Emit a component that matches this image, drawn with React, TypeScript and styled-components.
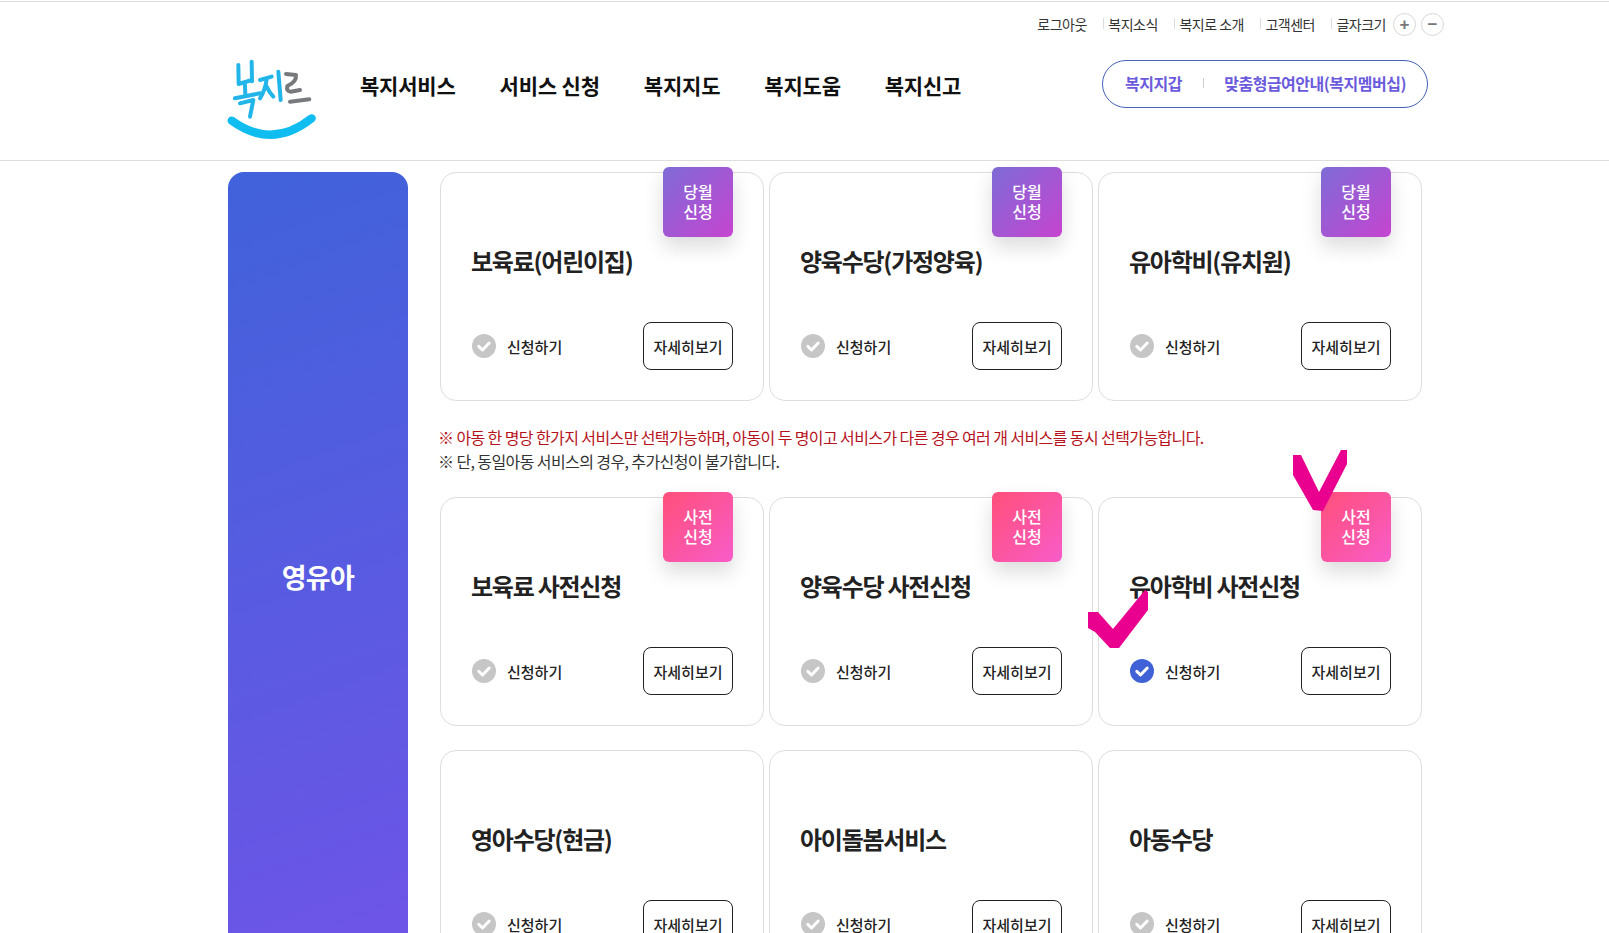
import React from "react";
import styled, { createGlobalStyle } from "styled-components";

const FONT = `"Noto Sans CJK KR", "Noto Sans", sans-serif`;

const topMenu = ["로그아웃", "복지소식", "복지로 소개", "고객센터"];
const mainMenu = ["복지서비스", "서비스 신청", "복지지도", "복지도움", "복지신고"];

type Service = { title: string; badge?: "month" | "pre"; checked?: boolean };

const firstRow: Service[] = [
	{ title: "보육료(어린이집)", badge: "month" },
	{ title: "양육수당(가정양육)", badge: "month" },
	{ title: "유아학비(유치원)", badge: "month" },
];

const restRows: Service[] = [
	{ title: "보육료 사전신청", badge: "pre" },
	{ title: "양육수당 사전신청", badge: "pre" },
	{ title: "유아학비 사전신청", badge: "pre", checked: true },
	{ title: "영아수당(현금)" },
	{ title: "아이돌봄서비스" },
	{ title: "아동수당" },
];

function Logo() {
	return (
		<LogoSvg viewBox="0 0 300 270">
			<g fill="none" stroke="#22b5ea" strokeWidth="12" strokeLinecap="round" strokeLinejoin="round">
				<path d="M49 33 L50 90 L90 78 M89 23 L90 82" />
				<path d="M39 133 L114 118 M69 93 L70 126" />
				<path d="M54 148 L94 138 L84 188" />
				<path d="M114 78 L149 68 M134 76 Q130 108 114 133 M134 98 Q142 116 154 128" />
				<path d="M169 53 L176 138" />
			</g>
			<path
				d="M192 60 L222 63 Q224 84 196 96 Q192 112 206 113 L234 108 M204 143 L262 136"
				fill="none"
				stroke="#77797c"
				strokeWidth="12"
				strokeLinecap="round"
				strokeLinejoin="round"
			/>
			<path d="M29 200 Q150 288 269 193" fill="none" stroke="#10bdf1" strokeWidth="25" strokeLinecap="round" />
		</LogoSvg>
	);
}

function CheckIcon({ on }: { on?: boolean }) {
	return (
		<svg width="24" height="24" viewBox="0 0 24 24">
			<circle cx="12" cy="12" r="12" fill={on ? "#3f62d6" : "#c6c6c6"} />
			<path d="M6.8 12.4 L10.5 16 L17.2 9" fill="none" stroke="#fff" strokeWidth="3" strokeLinecap="round" strokeLinejoin="round" />
		</svg>
	);
}

function Card({ item }: { item: Service }) {
	return (
		<CardBox>
			{item.badge && (
				<Badge $kind={item.badge}>
					<span>{item.badge === "month" ? "당월" : "사전"}</span>
					<span>신청</span>
				</Badge>
			)}
			<CardTitle>{item.title}</CardTitle>
			<CardFooter>
				<ApplyLabel>
					<CheckIcon on={item.checked} />
					신청하기
				</ApplyLabel>
				<DetailButton>자세히보기</DetailButton>
			</CardFooter>
		</CardBox>
	);
}

export default function App() {
	return (
		<Page>
			<GlobalStyle />
			<Header>
				<HeaderInner>
					<UtilRow>
						{topMenu.map((label, i) => (
							<UtilLink key={label} $first={i === 0}>
								{label}
							</UtilLink>
						))}
						<UtilLink>글자크기</UtilLink>
						<RoundButton>+</RoundButton>
						<RoundButton>−</RoundButton>
					</UtilRow>
					<MainRow>
						<Logo />
						<Nav>
							{mainMenu.map((label) => (
								<NavItem key={label}>{label}</NavItem>
							))}
						</Nav>
						<Pill>
							<PillLink>복지지갑</PillLink>
							<PillDivider />
							<PillLink>맞춤형급여안내(복지멤버십)</PillLink>
						</Pill>
					</MainRow>
				</HeaderInner>
			</Header>
			<Main>
				<SideTitle>영유아</SideTitle>
				<Content>
					<CardGrid>
						{firstRow.map((item) => (
							<Card key={item.title} item={item} />
						))}
					</CardGrid>
					<Notes>
						<Note $red>※ 아동 한 명당 한가지 서비스만 선택가능하며, 아동이 두 명이고 서비스가 다른 경우 여러 개 서비스를 동시 선택가능합니다.</Note>
						<Note>※ 단, 동일아동 서비스의 경우, 추가신청이 불가합니다.</Note>
					</Notes>
					<CardGrid>
						{restRows.map((item) => (
							<Card key={item.title} item={item} />
						))}
					</CardGrid>
				</Content>
			</Main>
			{/* hand-drawn marks on top of the capture */}
			<Mark $left={1293} $top={450} width="54" height="62" viewBox="0 0 54 62">
				<polygon points="0,5 0,25 20,60 30,61 54,14 54,0 48,0 26,42 8,5" />
			</Mark>
			<Mark $left={1088} $top={590} width="60" height="58" viewBox="0 0 60 58">
				<polygon points="0,22 0,38 7,42 22,58 31,58 60,20 60,2 57,0 25,39 10,22" />
			</Mark>
		</Page>
	);
}

const GlobalStyle = createGlobalStyle`
	html, body {
		margin: 0;
		height: 933px;
		overflow: hidden;
		background: #fff;
	}
`;

const Page = styled.div`
	position: relative;
	height: 933px;
	overflow: hidden;
	padding-top: 1px;
	box-sizing: border-box;
	font-family: ${FONT};
	color: #222;
`;

const Header = styled.header`
	height: 160px;
	box-sizing: border-box;
	border-top: 1px solid #dedede;
	border-bottom: 1px solid #dedede;
`;

const HeaderInner = styled.div`
	width: 1216px;
	margin-left: 228px;
`;

const UtilRow = styled.div`
	height: 44px;
	display: flex;
	align-items: center;
	justify-content: flex-end;
`;

const UtilLink = styled.a<{ $first?: boolean }>`
	position: relative;
	margin-left: ${({ $first }) => ($first ? "0" : "21.5px")};
	font-size: 14px;
	letter-spacing: -0.5px;
	color: #333;
	white-space: nowrap;

	&::before {
		content: "";
		display: ${({ $first }) => ($first ? "none" : "block")};
		position: absolute;
		left: -5px;
		top: 4px;
		width: 1px;
		height: 11px;
		background: #ddd;
	}
`;

const RoundButton = styled.button`
	width: 23px;
	height: 23px;
	margin-left: 5px;
	padding: 0;
	display: flex;
	align-items: center;
	justify-content: center;
	border: 1px solid #d8d8d8;
	border-radius: 50%;
	background: #fff;
	font-family: "Liberation Sans", sans-serif;
	font-size: 17px;
	font-weight: 700;
	color: #777;
	line-height: 1;

	&:first-of-type {
		margin-left: 7px;
	}
`;

const MainRow = styled.div`
	height: 114px;
	display: flex;
	align-items: flex-start;
`;

const LogoSvg = styled.svg`
	width: 100px;
	height: 90px;
	margin: 8px 0 0 -6px;
	flex-shrink: 0;
`;

const Nav = styled.nav`
	display: flex;
	gap: 44px;
	margin: 24px 0 0 38px;
`;

const NavItem = styled.a`
	font-size: 21px;
	line-height: 30px;
	font-weight: 700;
	letter-spacing: -0.2px;
	color: #111;
	white-space: nowrap;
`;

const Pill = styled.div`
	width: 326px;
	height: 48px;
	box-sizing: border-box;
	margin: 14px 16px 0 auto;
	padding: 0 21px 2px 22px;
	display: flex;
	align-items: center;
	justify-content: space-between;
	border: 1px solid #4460b8;
	border-radius: 24px;
`;

const PillLink = styled.a`
	font-size: 16px;
	font-weight: 700;
	letter-spacing: -0.5px;
	color: #6b5bdc;
	white-space: nowrap;
`;

const PillDivider = styled.span`
	width: 1px;
	height: 10px;
	background: #ccc;
`;

const Main = styled.main`
	width: 1194px;
	margin: 11px 0 0 228px;
	display: flex;
	gap: 32px;
	align-items: stretch;
`;

const SideTitle = styled.div`
	width: 180px;
	flex-shrink: 0;
	box-sizing: border-box;
	padding-top: 2px;
	display: flex;
	align-items: center;
	justify-content: center;
	border-radius: 16px;
	background: linear-gradient(160deg, #4062da 0%, #7054e8 100%);
	color: #fff;
	font-size: 27px;
	font-weight: 700;
	letter-spacing: -0.6px;
`;

const Content = styled.div`
	flex: 1;
	min-width: 0;
`;

const CardGrid = styled.div`
	display: grid;
	grid-template-columns: repeat(3, 324px);
	column-gap: 5px;
	row-gap: 24px;
`;

const CardBox = styled.article`
	position: relative;
	height: 229px;
	box-sizing: border-box;
	padding: 0 30px 30px;
	display: flex;
	flex-direction: column;
	justify-content: space-between;
	border: 1px solid #dedede;
	border-radius: 16px;
	background: #fff;
`;

const Badge = styled.div<{ $kind: "month" | "pre" }>`
	position: absolute;
	top: -6px;
	right: 30px;
	width: 70px;
	height: 70px;
	box-sizing: border-box;
	padding-bottom: 2px;
	display: flex;
	flex-direction: column;
	align-items: center;
	justify-content: center;
	border-radius: 6px;
	background: ${({ $kind }) =>
		$kind === "month"
			? "linear-gradient(135deg, #7e6bd6, #c644d0)"
			: "linear-gradient(135deg, #ff4f7a, #f85cc8)"};
	box-shadow: 0 10px 20px rgba(0, 0, 0, 0.14);
	color: #fff;
	font-size: 16px;
	line-height: 20px;
	font-weight: 500;
`;

const CardTitle = styled.h3`
	margin: 71px 0 0;
	font-size: 24px;
	line-height: 34px;
	font-weight: 700;
	letter-spacing: -1.25px;
	color: #222;
`;

const CardFooter = styled.div`
	display: flex;
	align-items: center;
	justify-content: space-between;
`;

const ApplyLabel = styled.label`
	padding-left: 1px;
	display: flex;
	align-items: center;
	gap: 11px;
	font-size: 15px;
	font-weight: 500;
	color: #222;
`;

const DetailButton = styled.button`
	width: 90px;
	height: 48px;
	padding: 0;
	border: 1px solid #222;
	border-radius: 8px;
	background: #fff;
	font-family: ${FONT};
	font-size: 15px;
	font-weight: 500;
	color: #222;
`;

const Notes = styled.div`
	margin: 24px 0 24px -2px;
`;

const Note = styled.p<{ $red?: boolean }>`
	margin: 0;
	font-size: 16px;
	line-height: 24px;
	letter-spacing: -0.6px;
	color: ${({ $red }) => ($red ? "#b5121b" : "#333")};
`;

const Mark = styled.svg<{ $left: number; $top: number }>`
	position: absolute;
	left: ${({ $left }) => $left}px;
	top: ${({ $top }) => $top}px;
	fill: #e9008e;
`;
